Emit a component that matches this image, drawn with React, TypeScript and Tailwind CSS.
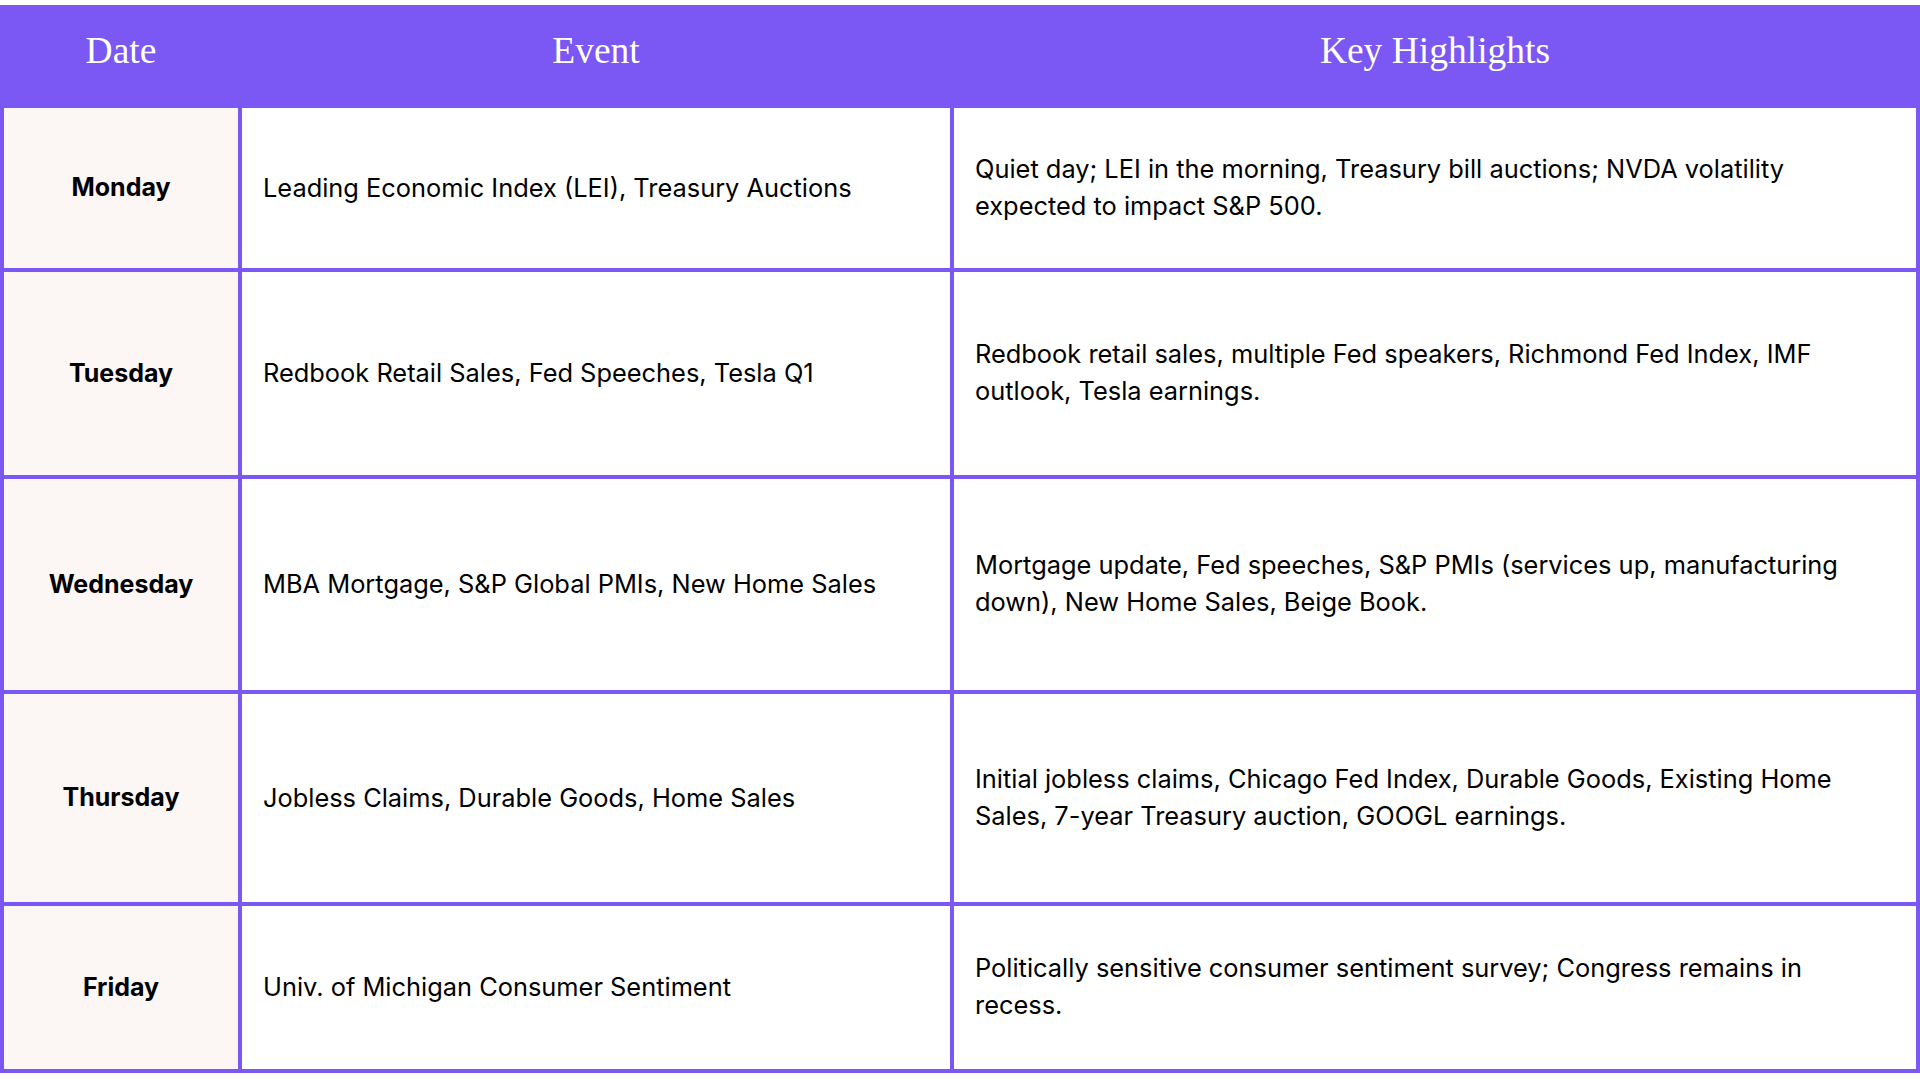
import React from "react";

type Row = { day: string; h: string; event: string; hl: [string, string] };

const rows: Row[] = [
  {
    day: "Monday",
    h: "h-[160px]",
    event: "Leading Economic Index (LEI), Treasury Auctions",
    hl: [
      "Quiet day; LEI in the morning, Treasury bill auctions; NVDA volatility",
      "expected to impact S&P 500.",
    ],
  },
  {
    day: "Tuesday",
    h: "h-[203px]",
    event: "Redbook Retail Sales, Fed Speeches, Tesla Q1",
    hl: [
      "Redbook retail sales, multiple Fed speakers, Richmond Fed Index, IMF",
      "outlook, Tesla earnings.",
    ],
  },
  {
    day: "Wednesday",
    h: "h-[211px]",
    event: "MBA Mortgage, S&P Global PMIs, New Home Sales",
    hl: [
      "Mortgage update, Fed speeches, S&P PMIs (services up, manufacturing",
      "down), New Home Sales, Beige Book.",
    ],
  },
  {
    day: "Thursday",
    h: "h-[208px]",
    event: "Jobless Claims, Durable Goods, Home Sales",
    hl: [
      "Initial jobless claims, Chicago Fed Index, Durable Goods, Existing Home",
      "Sales, 7-year Treasury auction, GOOGL earnings.",
    ],
  },
  {
    day: "Friday",
    h: "h-[163px]",
    event: "Univ. of Michigan Consumer Sentiment",
    hl: [
      "Politically sensitive consumer sentiment survey; Congress remains in",
      "recess.",
    ],
  },
];

export default function App() {
  return (
    <div className="w-[1920px] h-[1080px] bg-white pt-[5px] font-['Inter',sans-serif] text-black">
      <div className="grid grid-cols-[234px_708px_962px] gap-[4px] bg-[#7b57f4] px-[4px] pb-[4px]">
        {["Date", "Event", "Key Highlights"].map((t) => (
          <div
            key={t}
            className="h-[99px] flex items-center justify-center pb-[6px] text-white text-[37.5px] font-['Liberation_Serif',serif]"
          >
            {t}
          </div>
        ))}
        {rows.map((r) => (
          <React.Fragment key={r.day}>
            <div
              className={`${r.h} bg-[#fcf6f5] flex items-center justify-center text-[25px] font-bold`}
            >
              {r.day}
            </div>
            <div className={`${r.h} bg-white flex items-center px-[21px] text-[25.4px]`}>
              <span className="whitespace-nowrap">{r.event}</span>
            </div>
            <div className={`${r.h} bg-white flex items-center px-[21px] text-[25.4px] leading-[37px]`}>
              <p className="whitespace-nowrap pb-[3px]">
                {r.hl[0]}
                <br />
                {r.hl[1]}
              </p>
            </div>
          </React.Fragment>
        ))}
      </div>
    </div>
  );
}
